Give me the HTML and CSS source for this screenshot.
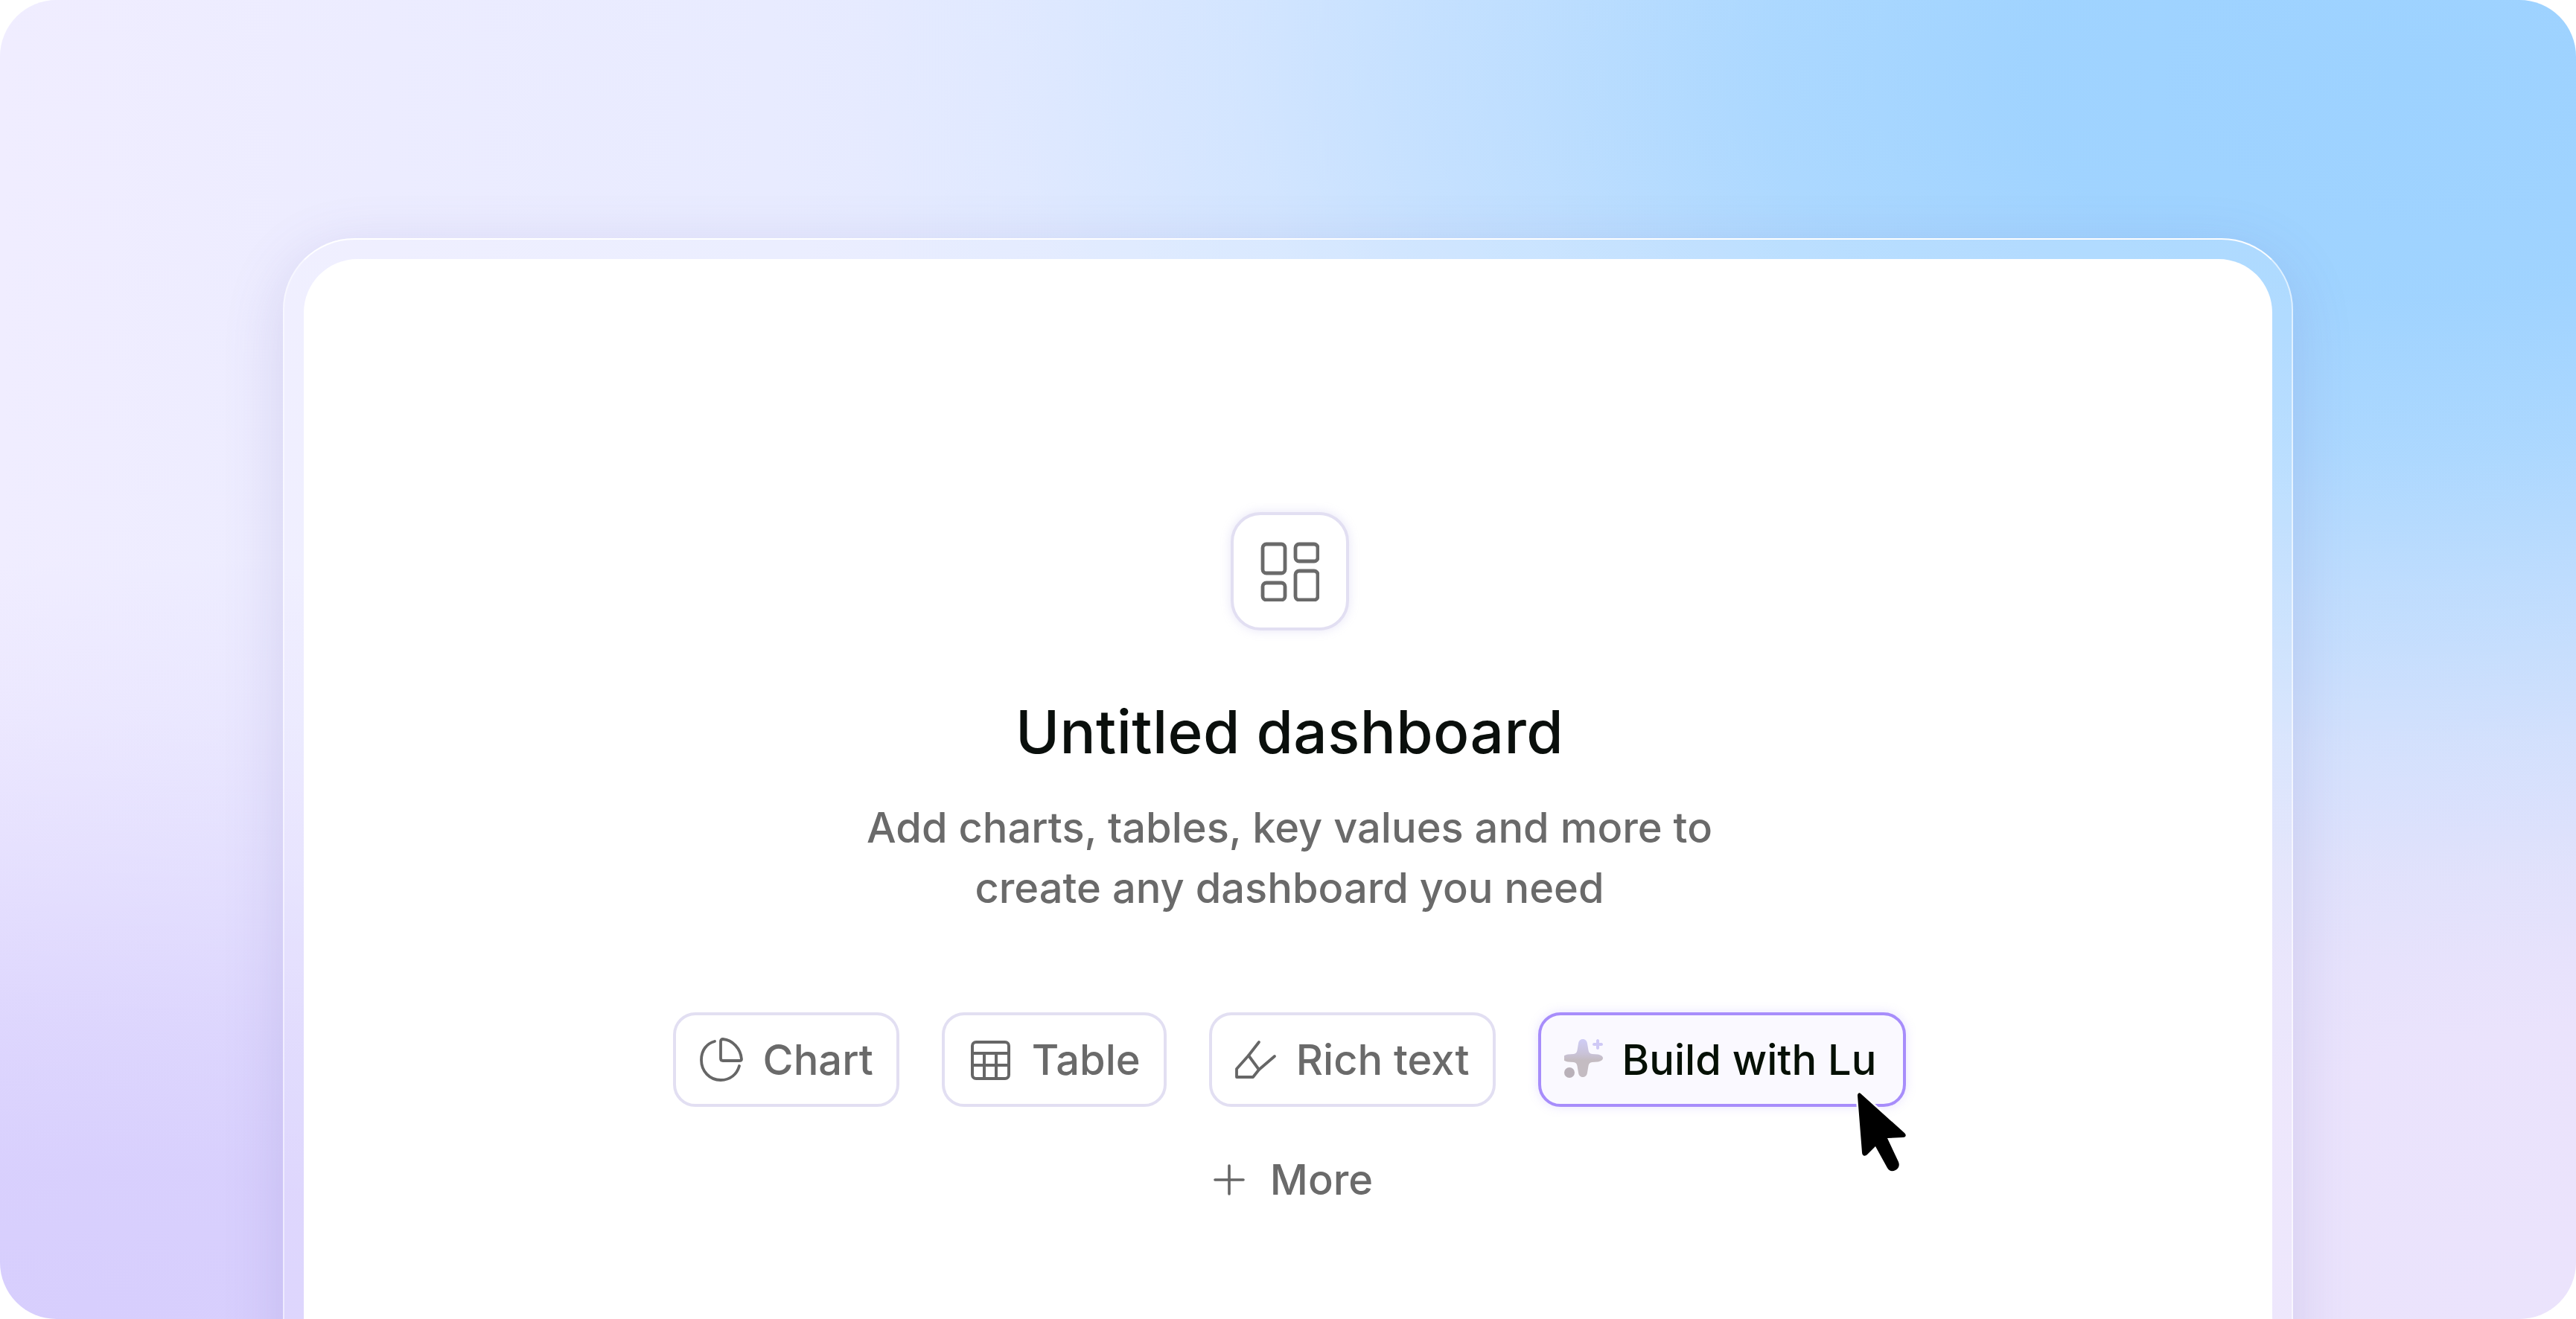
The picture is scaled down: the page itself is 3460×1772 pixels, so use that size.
FILE: index.html
```html
<!DOCTYPE html>
<html lang="en">
<head>
<meta charset="utf-8">
<title>Untitled dashboard</title>
<link rel="stylesheet" href="styles.css">
</head>
<body>
<main class="stage">
  <div class="frame">
    <section class="card">
      <div class="tile">
        <svg class="tile-icon" viewBox="0 0 80 80" fill="none" stroke="#6a6a6a" stroke-width="4.8">
          <rect x="4" y="3" width="30" height="39" rx="5"/>
          <rect x="48" y="3" width="30" height="23" rx="5"/>
          <rect x="4" y="55" width="30" height="23" rx="5"/>
          <rect x="48" y="39" width="30" height="39" rx="5"/>
        </svg>
      </div>
      <h1 class="title">Untitled dashboard</h1>
      <p class="subtitle">Add charts, tables, key values and more to<br>create any dashboard you need</p>
      <div class="actions">
        <button class="action">
          <svg class="icon" viewBox="0 0 60 60" fill="none" stroke="#666" stroke-width="3.8" stroke-linecap="round" stroke-linejoin="round">
            <path d="M21 5C10 8 3 17 3 30c0 15 11 27 26 27 13 0 22-8 25-19"/>
            <path d="M29 5c0-2 1-3 3-3 13 1 24 13 25 27 0 1-1 2-3 2H32c-2 0-3-1-3-3z"/>
          </svg>
          <span>Chart</span>
        </button>
        <button class="action">
          <svg class="icon" viewBox="0 0 60 60" fill="none" stroke="#666" stroke-width="4" stroke-linejoin="round">
            <rect x="6" y="6" width="49" height="49" rx="5"/>
            <path d="M6 21h49M6 37h49M22 21v34M38 21v34"/>
          </svg>
          <span>Table</span>
        </button>
        <button class="action">
          <svg class="icon icon-pen" viewBox="0 0 56 60" fill="none" stroke="#666" stroke-width="3.8" stroke-linecap="round" stroke-linejoin="round">
            <path d="M32 6 18 24 2 42v11h22l8-10 21-18"/>
            <path d="M18 24 32 43"/>
          </svg>
          <span>Rich text</span>
        </button>
        <button class="action action-primary">
          <svg class="icon icon-spark" viewBox="0 0 52 56">
            <defs>
              <linearGradient id="spark" x1="0.5" y1="0" x2="0.5" y2="1">
                <stop offset="0" stop-color="#cfcdf6"/>
                <stop offset="0.4" stop-color="#c9c2d6"/>
                <stop offset="0.55" stop-color="#c4bcc2"/>
                <stop offset="1" stop-color="#c4bcc2"/>
              </linearGradient>
            </defs>
            <path fill="url(#spark)" d="M25 0c3.500 0 5.500 2.500 6 6l1.500 9c.5 3 2 4.500 5 5l7.500 .5c4 .5 7 2.500 7 5s-3 4.500-7 5l-7.500 .5c-3 .5-4.500 2-5 5l-1.500 9c-.5 3.500-2.500 6-6 6s-5.500-2.500-6-6l-1.500-9c-.5-3-2-4.500-5-5l-7.500-.5c-4-.5-7-2.500-7-5s3-4.500 7-5l7.500-.5c3-.5 4.500-2 5-5l1.500-9c.5-3.500 2.500-6 6-6z"/>
            <path fill="#cfc9f6" d="M45 0c1 0 2 1 2 2v3h3c1 0 2 1 2 2s-1 2-2 2h-3v3c0 1-1 2-2 2s-2-1-2-2V9h-3c-1 0-2-1-2-2s1-2 2-2h3V2c0-1 1-2 2-2z"/>
            <circle cx="7" cy="45" r="7" fill="#b9b1b9"/>
          </svg>
          <span>Build with Lu</span>
          <svg class="cursor" viewBox="0 0 76 116">
            <path fill="#000" stroke="#fff" stroke-width="5" stroke-linejoin="round" paint-order="stroke" d="M6 5c1-1 2-1 3 0l59 53c3 3 2 6-2 6l-21 1 15 32c2 5 0 9-4 11s-8 2-11-3L29 76 18 87c-3 3-7 2-7-3L5 8c0-1 0-2 1-3z"/>
          </svg>
        </button>
      </div>
      <div class="more">
        <svg class="plus" viewBox="0 0 42 42" fill="none" stroke="#666" stroke-width="3.6" stroke-linecap="round">
          <path d="M21 2v38M2 21h38"/>
        </svg>
        <span>More</span>
      </div>
    </section>
  </div>
</main>
</body>
</html>
```

FILE: styles.css
```css
* { box-sizing: border-box; }
html, body { margin: 0; padding: 0; background: #fff; }
body { width: 3460px; height: 1772px; overflow: hidden; font-family: "Inter", "Liberation Sans", sans-serif; }

.stage {
  width: 3460px;
  height: 1772px;
  overflow: hidden;
  border-radius: 76px;
  padding-top: 320px;
  background:
    radial-gradient(2100px 1200px at 3250px 100px, #9dd2ff 0%, rgba(159,211,255,.98) 25%, rgba(165,214,255,.85) 42%, rgba(175,218,255,.6) 58%, rgba(190,224,255,.32) 75%, rgba(205,230,255,.1) 90%, rgba(210,230,255,0) 100%),
    radial-gradient(2100px 1020px at 150px 1772px, #d7cefd 0%, rgba(215,206,253,.95) 20%, rgba(215,206,253,.72) 40%, rgba(215,206,253,.42) 60%, rgba(215,206,253,.16) 80%, rgba(215,206,253,0) 100%),
    radial-gradient(2000px 1300px at 3460px 1772px, #ebe3fc 0%, rgba(235,227,252,.97) 30%, rgba(232,225,251,.75) 50%, rgba(228,224,250,.4) 72%, rgba(228,224,250,0) 100%),
    linear-gradient(90deg, #f0edff 0%, #e8ebff 30%, #d8e6ff 55%, #cfe0fd 100%);
}

.frame {
  width: 2700px;
  height: 1600px;
  margin: 0 auto;
  padding: 28px 28px 0;
  border-radius: 96px;
  background: rgba(255,255,255,.16);
  border-top: 2px solid rgba(255,255,255,.95);
  border-left: 2px solid rgba(255,255,255,.5);
  border-right: 2px solid rgba(255,255,255,.6);
  box-shadow: 0 20px 80px rgba(100,90,170,.18);
}

.card {
  height: 1600px;
  margin-top: -2px;
  margin-inline: -2px;
  padding: 340px 0 0 4px;
  background: #fff;
  border-radius: 72px;
  display: flex;
  flex-direction: column;
  align-items: center;
}

.tile {
  width: 159px;
  height: 159px;
  border: 4px solid #e2dff2;
  border-radius: 40px;
  background: #fff;
  box-shadow: 0 0 14px rgba(170,160,225,.28);
  display: flex;
  align-items: center;
  justify-content: center;
}
.tile-icon { width: 80px; height: 80px; }

.title {
  margin: 88px 0 0;
  font-size: 80px;
  line-height: 96px;
  font-weight: 500;
  color: #0a0f0c;
  letter-spacing: 0.4px;
}

.subtitle {
  margin: 41px 0 0;
  font-size: 56px;
  line-height: 81px;
  font-weight: 500;
  color: #6a6a6a;
  text-align: center;
}

.actions {
  margin-top: 126px;
  display: flex;
  gap: 57px;
}

.action {
  position: relative;
  height: 127px;
  padding: 0 31px;
  display: flex;
  align-items: center;
  gap: 26px;
  border: 4px solid #e2dff2;
  border-radius: 30px;
  background: #fff;
  color: #6a6a6a;
  font-family: inherit;
  font-size: 56px;
  font-weight: 500;
}
.action-primary {
  padding-right: 36px;
  border-color: #a78dfb;
  background: #faf9ff;
  color: #051005;
  box-shadow: 0 0 14px rgba(165,145,250,.25);
}
.icon { width: 60px; height: 60px; flex: none; }
.icon-pen { width: 56px; }
.icon-spark { width: 52px; height: 56px; }

.cursor {
  position: absolute;
  left: 420px;
  top: 100px;
  width: 76px;
  height: 116px;
}

.more {
  margin-top: 64px;
  margin-left: 10px;
  display: flex;
  align-items: center;
  gap: 34px;
  color: #6a6a6a;
  font-size: 56px;
  font-weight: 500;
  line-height: 68px;
}
.plus { width: 42px; height: 42px; }
```
